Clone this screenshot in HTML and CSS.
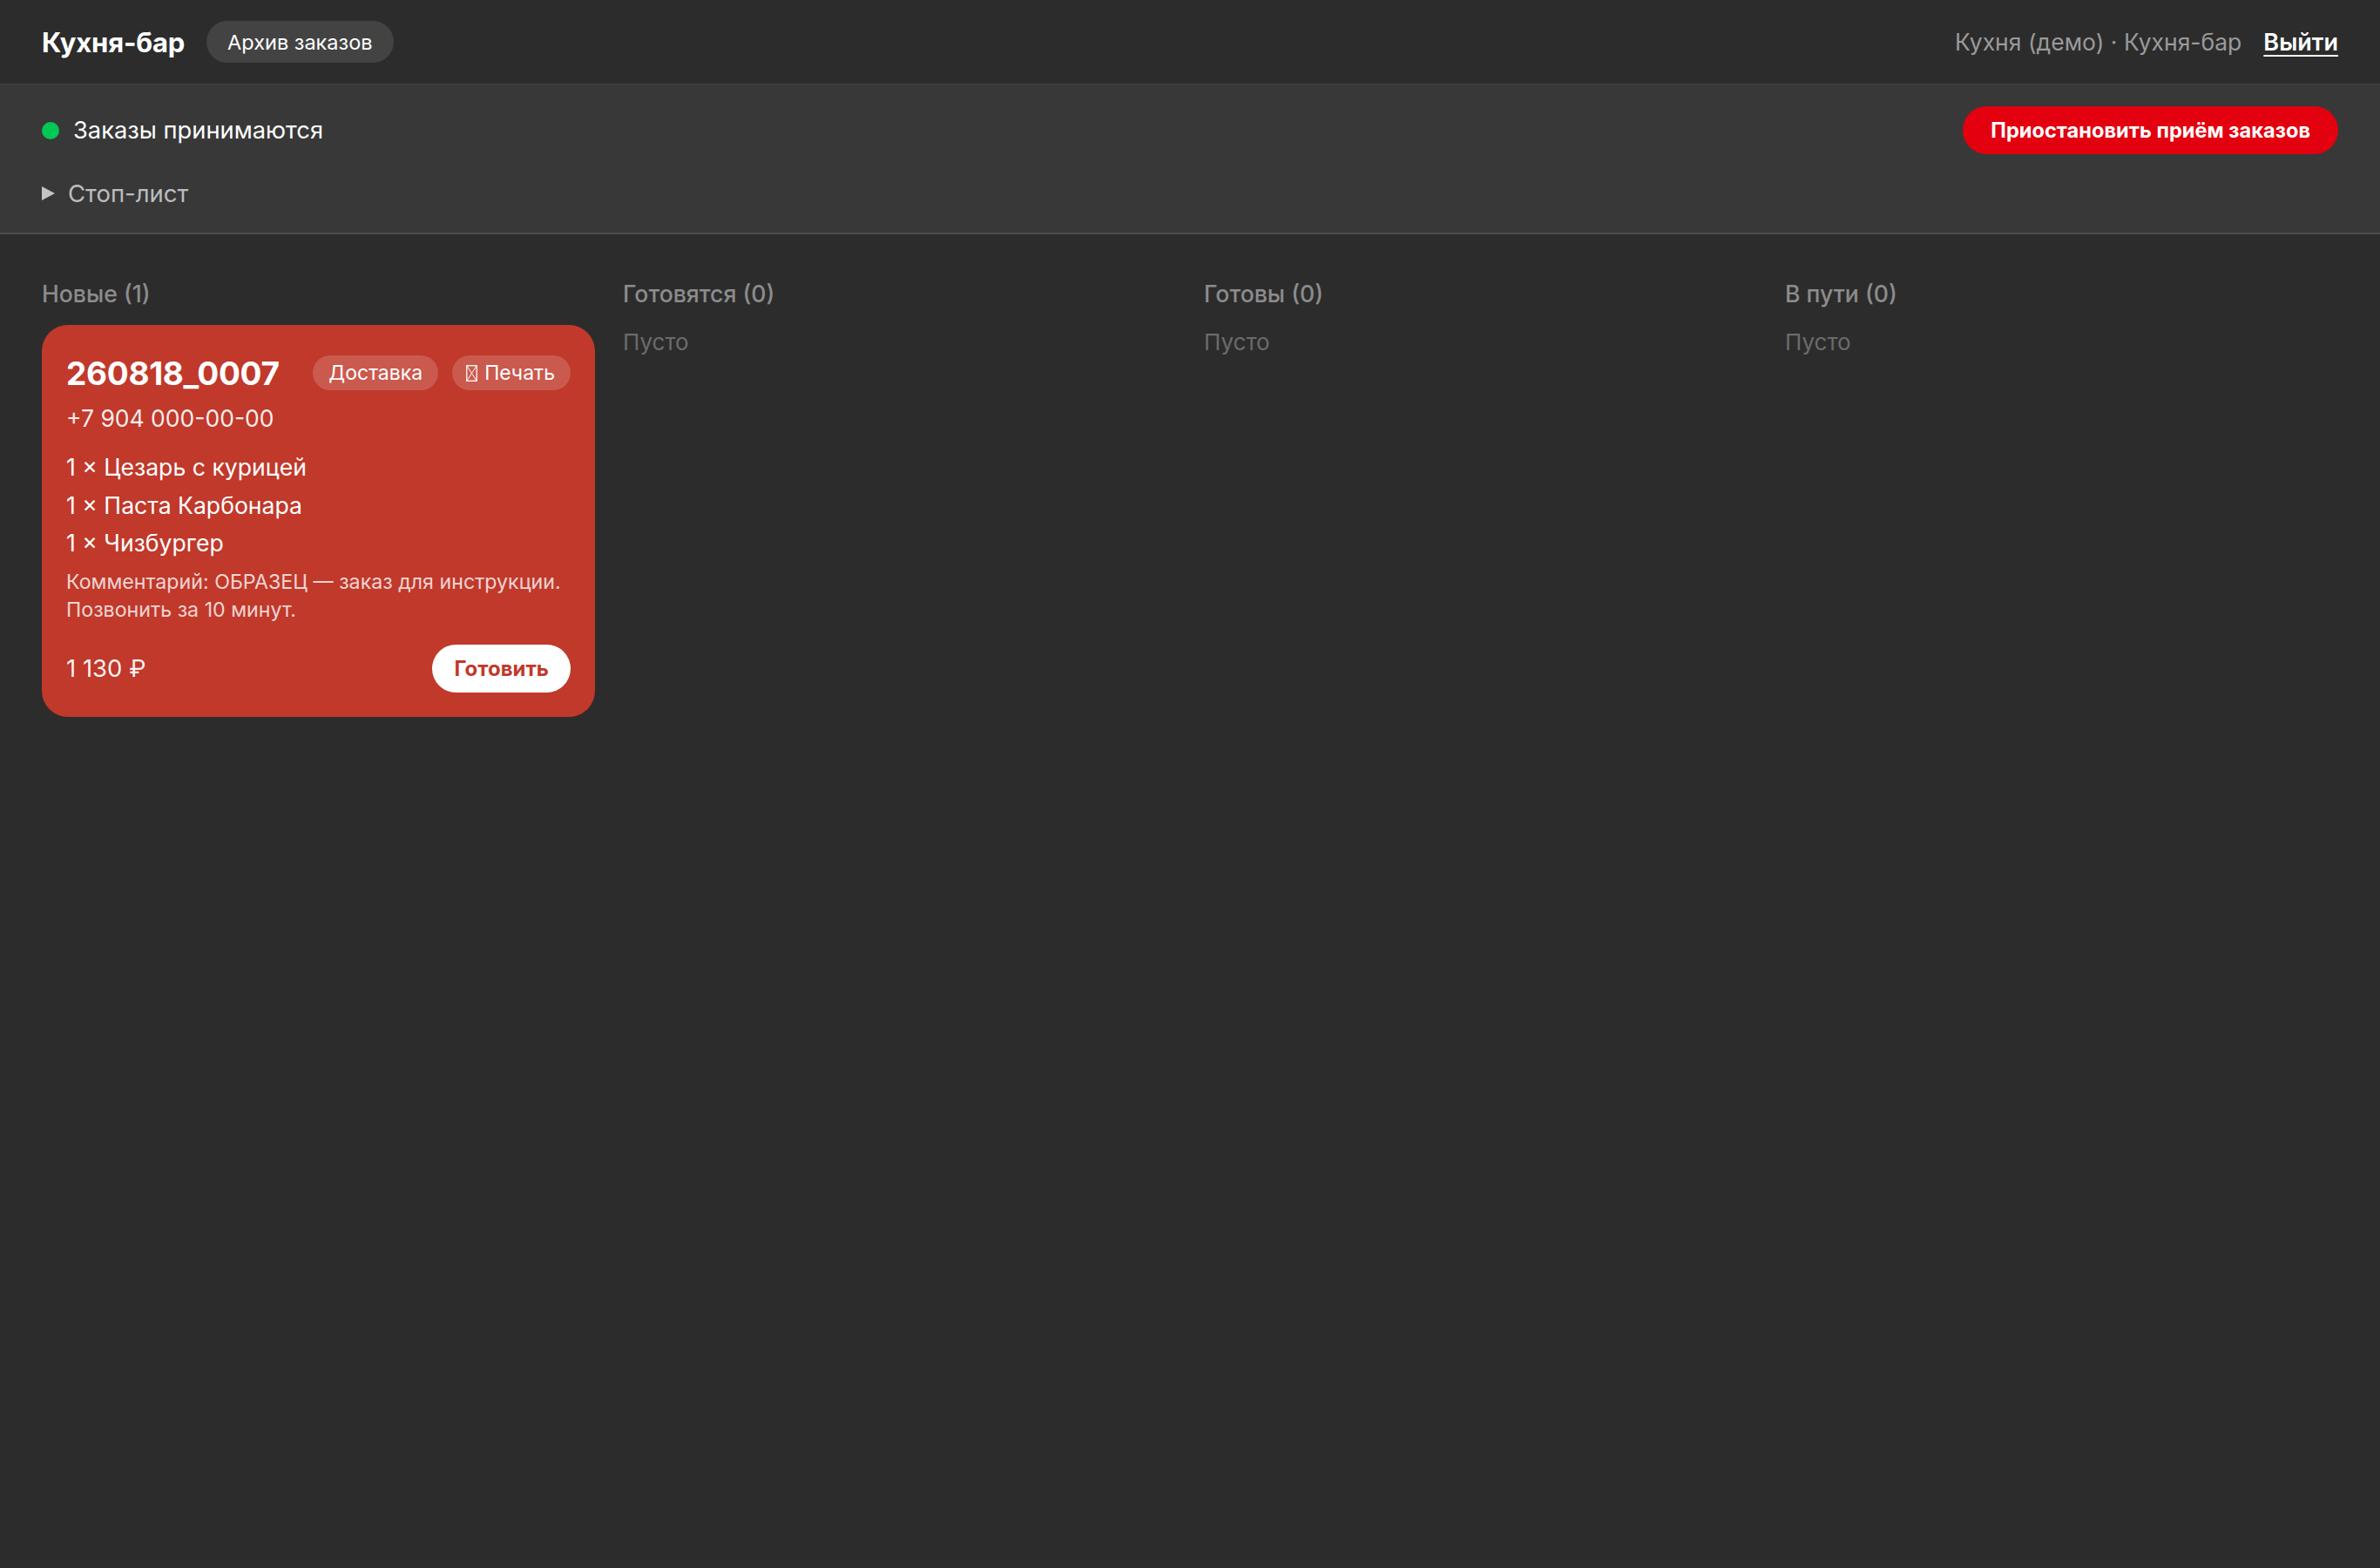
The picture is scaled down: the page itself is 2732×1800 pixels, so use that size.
FILE: index.html
```html
<!DOCTYPE html>
<html lang="ru">
<head>
<meta charset="utf-8">
<title>Кухня-бар</title>
<link rel="stylesheet" href="styles.css">
</head>
<body>
<header class="topbar">
  <div class="topbar-left">
    <span class="brand">Кухня-бар</span>
    <a class="pill-link" href="#">Архив заказов</a>
  </div>
  <div class="topbar-right">
    <span class="venue">Кухня (демо) · Кухня-бар</span>
    <a class="logout" href="#">Выйти</a>
  </div>
</header>

<section class="statusbar">
  <div class="status-row">
    <div class="status">
      <span class="status-dot"></span>
      <span class="status-text">Заказы принимаются</span>
    </div>
    <button class="btn-pause" type="button">Приостановить приём заказов</button>
  </div>
  <div class="stoplist">
    <span class="stoplist-arrow"></span>
    <span class="stoplist-label">Стоп-лист</span>
  </div>
</section>

<main class="board">
  <section class="column">
    <h2 class="column-title">Новые (1)</h2>
    <article class="order-card">
      <div class="order-head">
        <span class="order-id">260818_0007</span>
        <div class="order-tags">
          <span class="tag">Доставка</span>
          <span class="tag tag-print"><svg class="glyph-box" width="13" height="19" viewBox="0 0 13 19"><rect x="0.75" y="0.75" width="11.5" height="17.5" fill="none" stroke="#fff" stroke-width="1.3"/><path d="M1 1 L12 18 M12 1 L1 18" stroke="#fff" stroke-width="1"/></svg>Печать</span>
        </div>
      </div>
      <div class="order-phone">+7 904 000-00-00</div>
      <ul class="order-items">
        <li>1 × Цезарь с курицей</li>
        <li>1 × Паста Карбонара</li>
        <li>1 × Чизбургер</li>
      </ul>
      <p class="order-comment">Комментарий: ОБРАЗЕЦ — заказ для инструкции. Позвонить за 10 минут.</p>
      <div class="order-foot">
        <span class="order-total">1 130 ₽</span>
        <button class="btn-cook" type="button">Готовить</button>
      </div>
    </article>
  </section>
  <section class="column">
    <h2 class="column-title">Готовятся (0)</h2>
    <div class="column-empty">Пусто</div>
  </section>
  <section class="column">
    <h2 class="column-title">Готовы (0)</h2>
    <div class="column-empty">Пусто</div>
  </section>
  <section class="column">
    <h2 class="column-title">В пути (0)</h2>
    <div class="column-empty">Пусто</div>
  </section>
</main>
</body>
</html>
```

FILE: styles.css
```css
* {
  box-sizing: border-box;
}

html, body {
  margin: 0;
  padding: 0;
}

body {
  background: #2c2c2c;
  color: #ffffff;
  font-family: "Inter", "Liberation Sans", sans-serif;
  font-size: 28px;
  min-height: 1800px;
}

/* top bar */
.topbar {
  height: 97px;
  padding: 0 48px;
  display: flex;
  align-items: center;
  justify-content: space-between;
  border-bottom: 1px solid #454545;
}

.topbar-left {
  display: flex;
  align-items: center;
  gap: 25px;
}

.brand {
  font-size: 31px;
  font-weight: 700;
  letter-spacing: -0.2px;
}

.pill-link {
  display: inline-flex;
  align-items: center;
  height: 48px;
  padding: 0 24px;
  border-radius: 24px;
  background: #434343;
  color: #ffffff;
  font-size: 23.5px;
  text-decoration: none;
}

.topbar-right {
  display: flex;
  align-items: center;
  gap: 25px;
}

.venue {
  color: #9a9a9a;
  font-size: 26.5px;
}

.logout {
  color: #ffffff;
  font-size: 27px;
  font-weight: 600;
  text-decoration: underline;
  text-underline-offset: 5px;
  text-decoration-thickness: 2px;
}

/* status bar */
.statusbar {
  background: #383838;
  padding: 25px 48px 24px;
  border-bottom: 2px solid #4d4d4d;
  display: flex;
  flex-direction: column;
  gap: 24px;
}

.status-row {
  display: flex;
  align-items: center;
  justify-content: space-between;
}

.status {
  display: flex;
  align-items: center;
  gap: 16px;
}

.status-dot {
  width: 20px;
  height: 20px;
  border-radius: 50%;
  background: #00c853;
}

.status-text {
  font-size: 27.3px;
}

.btn-pause {
  height: 55px;
  padding: 0 32px;
  border: 0;
  border-radius: 28px;
  background: #e3000f;
  color: #ffffff;
  font-family: inherit;
  font-size: 23.6px;
  font-weight: 700;
}

.stoplist {
  display: flex;
  align-items: center;
  gap: 15px;
  height: 42px;
}

.stoplist-arrow {
  width: 0;
  height: 0;
  border-top: 8px solid transparent;
  border-bottom: 8px solid transparent;
  border-left: 15px solid #c4c4c4;
}

.stoplist-label {
  color: #bdbdbd;
  font-size: 27.5px;
}

/* order board */
.board {
  display: grid;
  grid-template-columns: repeat(4, 1fr);
  gap: 32px;
  padding: 50px 48px 48px;
}

.column-title {
  margin: 0 0 18px;
  font-size: 26.6px;
  line-height: 36px;
  font-weight: 500;
  color: #8c8c8c;
}

.column-empty {
  font-size: 26px;
  line-height: 40px;
  color: #6b6b6b;
}

.order-card {
  background: #c0392b;
  border-radius: 30px;
  padding: 28px;
}

.order-head {
  display: flex;
  align-items: center;
  justify-content: space-between;
  height: 54px;
}

.order-id {
  font-size: 37px;
  font-weight: 700;
  letter-spacing: -0.3px;
}

.order-tags {
  display: flex;
  gap: 16px;
}

.tag {
  display: inline-flex;
  align-items: center;
  gap: 8px;
  height: 40px;
  padding: 0 18px;
  border-radius: 20px;
  background: rgba(255, 255, 255, 0.17);
  font-size: 23px;
}

.tag-print {
  padding-left: 16px;
}

.glyph-box {
  display: block;
}

.order-phone {
  margin-top: 4px;
  font-size: 26.5px;
  line-height: 42px;
  color: rgba(255, 255, 255, 0.92);
}

.order-items {
  list-style: none;
  margin: 14px 0 0;
  padding: 0;
  font-size: 26.6px;
  line-height: 43.5px;
}

.order-comment {
  margin: 6px 0 0;
  font-size: 23.2px;
  line-height: 32px;
  color: rgba(255, 255, 255, 0.8);
}

.order-foot {
  margin-top: 24px;
  display: flex;
  align-items: center;
  justify-content: space-between;
}

.order-total {
  font-size: 27.5px;
  color: rgba(255, 255, 255, 0.94);
}

.btn-cook {
  height: 55px;
  padding: 0 25px;
  border: 0;
  border-radius: 28px;
  background: #ffffff;
  color: #c0392b;
  font-family: inherit;
  font-size: 24px;
  font-weight: 700;
}
```
